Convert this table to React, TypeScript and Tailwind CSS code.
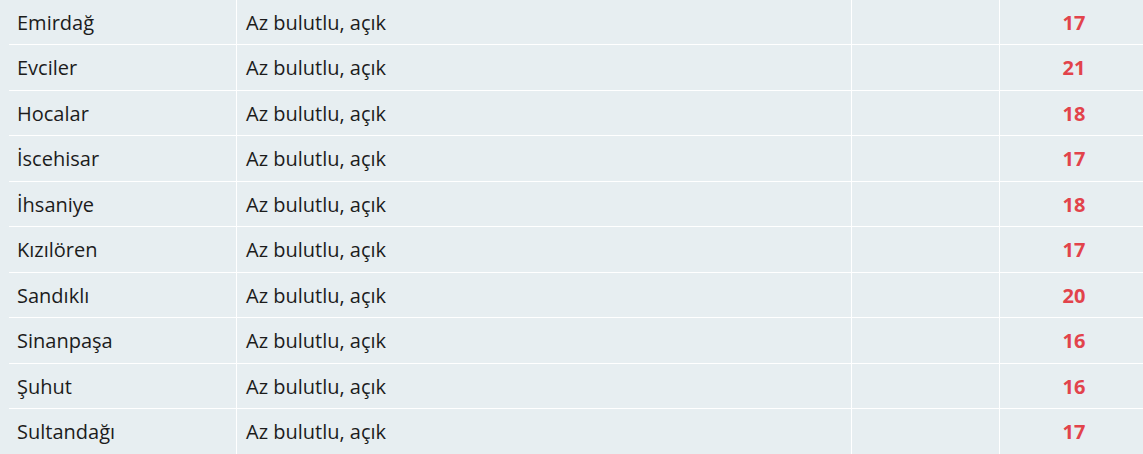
const rows: [string, number][] = [
  ["Emirdağ", 17],
  ["Evciler", 21],
  ["Hocalar", 18],
  ["İscehisar", 17],
  ["İhsaniye", 18],
  ["Kızılören", 17],
  ["Sandıklı", 20],
  ["Sinanpaşa", 16],
  ["Şuhut", 16],
  ["Sultandağı", 17],
];

export default function App() {
  return (
    <div className="w-[1143px] h-[454px] overflow-hidden bg-[#e7eef1] font-['Open_Sans',sans-serif] text-[20px] text-[#1c1c1c]">
      <div className="pl-[9px] -mt-[0.5px]">
        {rows.map(([town, temp]) => (
          <div key={town} className="flex h-[45.5px] border-b border-white">
            <div className="w-[227px] pl-[8px] flex items-center pt-[2px]">{town}</div>
            <div className="w-[615px] border-l border-white pl-[9px] flex items-center pt-[2px]">
              Az bulutlu, açık
            </div>
            <div className="w-[148px] border-l border-white" />
            <div className="flex-1 border-l border-white flex items-center justify-center pl-[5px] pt-[2px] font-bold text-[#e2434b]">
              {temp}
            </div>
          </div>
        ))}
      </div>
    </div>
  );
}
